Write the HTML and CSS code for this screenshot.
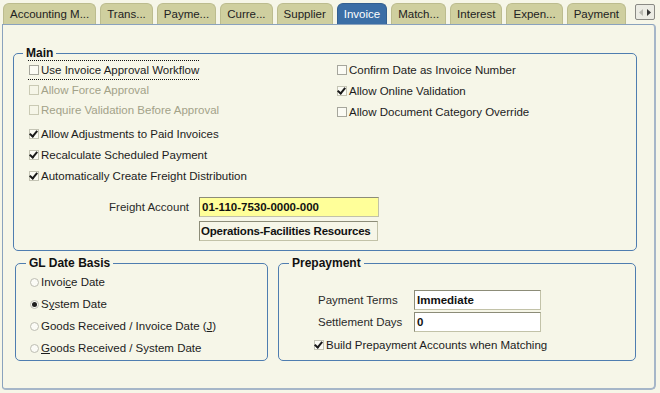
FILE: index.html
```html
<!DOCTYPE html>
<html lang="en">
<head>
  <meta charset="UTF-8" />
  <title>Payables Options - Invoice</title>
  <link rel="stylesheet" href="styles.css">
</head>
<body>
  <div class="tabs">
    <div class="tab">Accounting M...</div>
    <div class="tab">Trans...</div>
    <div class="tab">Payme...</div>
    <div class="tab">Curre...</div>
    <div class="tab">Supplier</div>
    <div class="tab active">Invoice</div>
    <div class="tab">Match...</div>
    <div class="tab">Interest</div>
    <div class="tab">Expen...</div>
    <div class="tab">Payment</div>
    <div class="scroll">
      <svg width="14" height="9" viewBox="0 0 14 9"><path d="M5 1 L1 4.5 L5 8 Z" fill="#b8b8b0"/><path d="M9 1 L13 4.5 L9 8 Z" fill="#333"/></svg>
    </div>
  </div>

  <div class="panel">
    <fieldset class="group main">
      <legend>Main</legend>
      <div class="cols">
        <div class="col left">
          <div class="row focus"><span class="cb"></span>Use Invoice Approval Workflow</div>
          <div class="row disabled"><span class="cb"></span>Allow Force Approval</div>
          <div class="row disabled"><span class="cb"></span>Require Validation Before Approval</div>
          <div class="row tall gap"><span class="cb on"></span>Allow Adjustments to Paid Invoices</div>
          <div class="row tall"><span class="cb on"></span>Recalculate Scheduled Payment</div>
          <div class="row tall"><span class="cb on"></span>Automatically Create Freight Distribution</div>
        </div>
        <div class="col right">
          <div class="row tall"><span class="cb"></span>Confirm Date as Invoice Number</div>
          <div class="row tall"><span class="cb on"></span>Allow Online Validation</div>
          <div class="row tall"><span class="cb"></span>Allow Document Category Override</div>
        </div>
      </div>
      <div class="freight">
        <label class="prompt">Freight Account</label>
        <div class="field required">01-110-7530-0000-000</div>
        <span></span>
        <div class="field readonly">Operations-Facilities Resources</div>
      </div>
    </fieldset>

    <div class="lower">
      <fieldset class="group gl">
        <legend>GL Date Basis</legend>
        <div class="radio-row"><span class="rb"></span>Invoi<u>c</u>e Date</div>
        <div class="radio-row"><span class="rb on"></span>S<u>y</u>stem Date</div>
        <div class="radio-row"><span class="rb"></span>Goods Received / Invoice Date (<u>J</u>)</div>
        <div class="radio-row"><span class="rb"></span><u>G</u>oods Received / System Date</div>
      </fieldset>

      <fieldset class="group prepay">
        <legend>Prepayment</legend>
        <div class="terms">
          <label class="prompt">Payment Terms</label>
          <div class="field">Immediate</div>
          <label class="prompt">Settlement Days</label>
          <div class="field">0</div>
        </div>
        <div class="row build"><span class="cb on"></span>Build Prepayment Accounts when Matching</div>
      </fieldset>
    </div>
  </div>
</body>
</html>
```

FILE: styles.css
```css
body {
  margin: 0;
  width: 660px;
  height: 393px;
  background: #f6f6e8;
  font-family: "Liberation Sans", Arial, sans-serif;
  font-size: 11.5px;
  color: #1c1c1c;
  overflow: hidden;
}
.tabs {
  display: flex;
  align-items: flex-end;
  height: 24px;
  padding-left: 3px;
  gap: 4px;
}
.tab {
  flex: none;
  height: 20px;
  line-height: 21px;
  padding: 0 6px;
  background: #cfcf9f;
  border: 1px solid #bcbc8e;
  border-bottom: none;
  border-radius: 6px 6px 0 0;
  color: #222;
  white-space: nowrap;
}
.tab.active {
  background: #3b6ea6;
  border-color: #335f90;
  color: #fff;
}
.scroll {
  flex: none;
  margin-left: 5px;
  margin-bottom: 4px;
  width: 20px;
  height: 16px;
  box-sizing: border-box;
  border: 1px solid #8a8a84;
  border-radius: 2px;
  background: #ecece4;
  display: flex;
  align-items: center;
  justify-content: center;
}
.panel {
  margin-left: 2px;
  width: 654px;
  height: 366px;
  box-sizing: border-box;
  border: 1px solid #8aa2bd;
  border-right: 2px solid #a6b6c8;
  border-bottom: 2px solid #a6b6c8;
  border-radius: 0 4px 5px 4px;
  padding: 21px 0 0 10px;
}
.group {
  margin: 0;
  padding: 0;
  border: 1px solid #4f7db0;
  border-radius: 5px;
  box-sizing: border-box;
}
.group legend {
  font-weight: bold;
  font-size: 12px;
  line-height: 14px;
  padding: 0 3px;
  color: #111;
}
.main {
  width: 624px;
  height: 205px;
  padding-left: 14px;
}
.main legend {
  margin-left: -5px;
}
.cols {
  display: flex;
}
.col.left {
  width: 308px;
}
.col.right {
  margin-top: -1px;
}
.row {
  display: flex;
  align-items: center;
  height: 20px;
  white-space: nowrap;
}
.row.tall {
  height: 21px;
}
.row.gap {
  margin-top: 3px;
}
.row.focus {
  box-sizing: border-box;
  width: 171px;
  border-top: 1px dotted #111;
  border-bottom: 1px dotted #111;
}
.row.disabled {
  color: #a3a288;
}
.cb {
  display: inline-block;
  width: 10px;
  height: 10px;
  margin: 0 2px 0 1px;
  box-sizing: border-box;
  border: 1px solid #a6a69c;
  background: #fbfbf4;
  position: relative;
  flex: none;
}
.row.disabled .cb {
  border-color: #cacab4;
  background: transparent;
}
.cb.on {
  border-color: #c4c4b4;
}
.cb.on::after {
  content: "";
  position: absolute;
  left: 1px;
  top: -1px;
  width: 3px;
  height: 6px;
  border: solid #1a1a1a;
  border-width: 0 2px 2px 0;
  transform: rotate(40deg);
}
.freight {
  display: grid;
  grid-template-columns: 161px 180px;
  column-gap: 10px;
  row-gap: 4px;
  margin-top: 11px;
}
.prompt {
  text-align: right;
  align-self: center;
  color: #2a2a2a;
}
.terms .prompt {
  text-align: left;
}
.field {
  height: 20px;
  line-height: 19px;
  box-sizing: border-box;
  padding-left: 2px;
  border: 1px solid #c2c2a8;
  border-top-color: #8c8c78;
  border-left-color: #8c8c78;
  background: #fff;
  font-weight: bold;
  color: #111;
  white-space: nowrap;
  overflow: hidden;
}
.field.required {
  background: #ffff99;
}
.field.readonly {
  background: #f6f6e8;
  width: 179px;
  padding-left: 1px;
  letter-spacing: -0.2px;
}
.lower {
  display: flex;
  margin-top: 5px;
  margin-left: 2px;
}
.gl {
  width: 253px;
  height: 105px;
  padding-left: 13px;
}
.gl legend {
  margin-left: -3px;
}
.radio-row {
  display: flex;
  align-items: center;
  height: 22px;
  white-space: nowrap;
}
.radio-row:first-of-type {
  margin-top: 1px;
}
.rb {
  display: inline-block;
  width: 9px;
  height: 9px;
  box-sizing: border-box;
  border: 1px solid #bdbdb2;
  border-radius: 50%;
  background: #fbfbf6;
  margin: 0 2px 0 1px;
  position: relative;
  flex: none;
}
.rb.on::after {
  content: "";
  position: absolute;
  left: 1px;
  top: 1px;
  width: 5px;
  height: 5px;
  border-radius: 50%;
  background: #1e1e1e;
}
.prepay {
  width: 358px;
  height: 105px;
  margin-left: 10px;
  padding-left: 34px;
}
.prepay legend {
  margin-left: -24px;
}
.terms {
  display: grid;
  grid-template-columns: 96px 127px;
  row-gap: 2px;
  margin-top: 20px;
  margin-left: 5px;
}
.row.build {
  margin-top: 3px;
}
```
